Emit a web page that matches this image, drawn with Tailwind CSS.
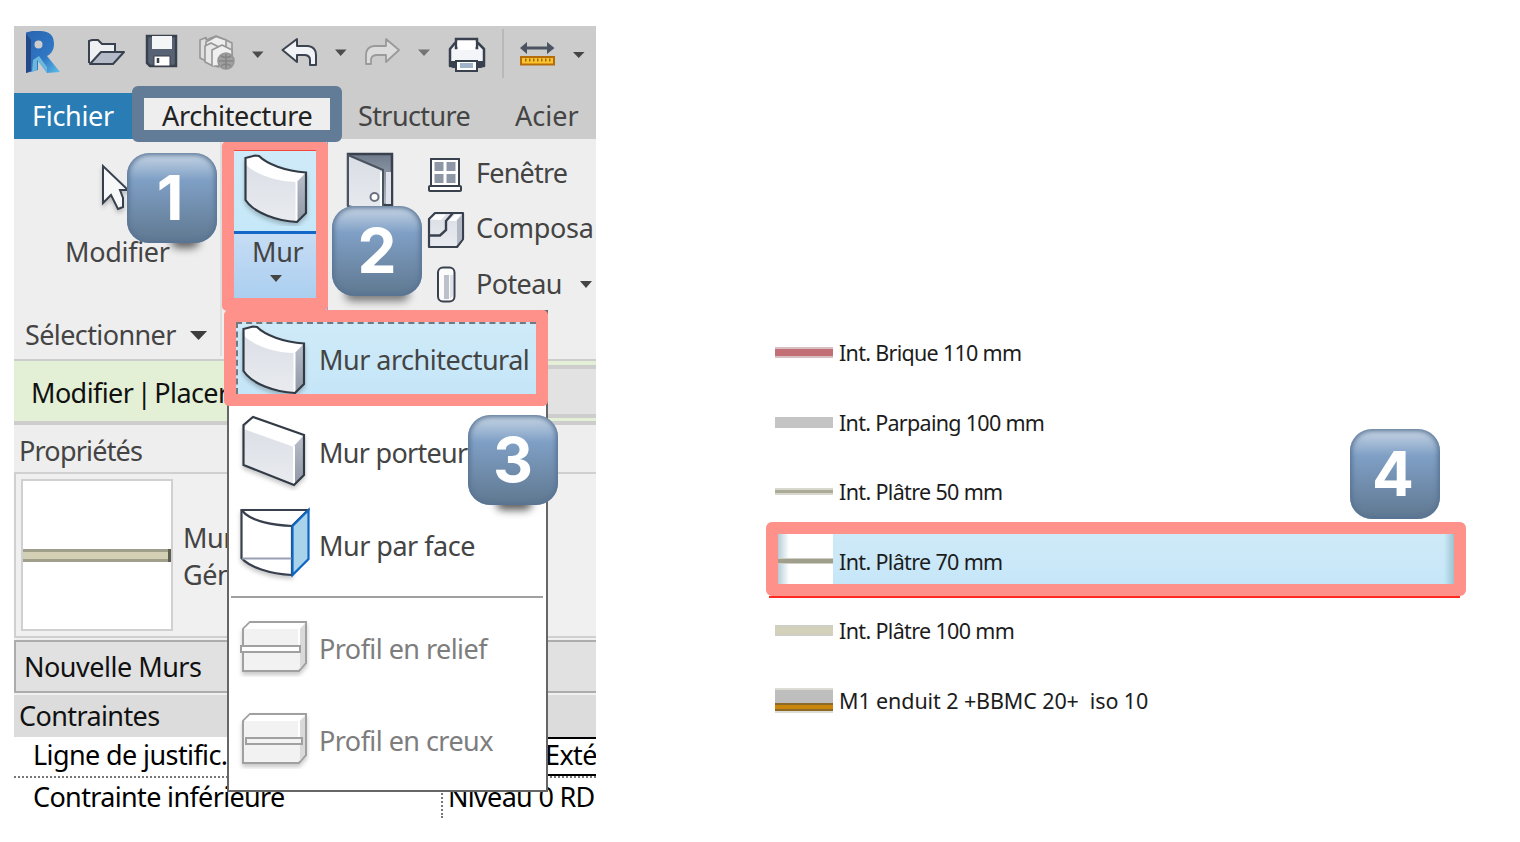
<!DOCTYPE html>
<html lang="fr">
<head>
<meta charset="utf-8">
<title>Murs</title>
<script src="https://cdn.jsdelivr.net/npm/@tailwindcss/browser@4"></script>
</head>
<body class="bg-white">
<svg width="0" height="0" class="absolute">
  <defs>
    <linearGradient id="face" x1="0" y1="0" x2="0" y2="1"><stop offset="0" stop-color="#d9dde5"/><stop offset="1" stop-color="#e9ebef"/></linearGradient>
    <linearGradient id="side" x1="0" y1="0" x2="0" y2="1"><stop offset="0" stop-color="#b9bfca"/><stop offset="1" stop-color="#8f97a5"/></linearGradient>
    <linearGradient id="glass" x1="0" y1="0" x2="0" y2="1"><stop offset="0" stop-color="#6f7b8c"/><stop offset="1" stop-color="#b4bac6"/></linearGradient>
    <linearGradient id="rblue" x1="0" y1="0" x2="1" y2="1"><stop offset="0" stop-color="#2a62b0"/><stop offset=".6" stop-color="#2f78c4"/><stop offset="1" stop-color="#5fc0ea"/></linearGradient>
    <filter id="sh" x="-20%" y="-20%" width="140%" height="150%"><feDropShadow dx="0" dy="3" stdDeviation="2" flood-opacity=".22"/></filter>
    <symbol id="wall" viewBox="0 0 74 76">
      <g filter="url(#sh)">
      <path d="M6.500 8L16 5.500L20 6C28 14 46 21 67 22.500V63L58 72C38 71 15 63 6.500 50Z" fill="url(#face)"/>
      <path d="M6.500 8L16 5.500L20 6C28 14 46 21 67 22.500L58 32C38 32 15 24 6.500 14Z" fill="#fff"/>
      <path d="M58 32L67 22.500V63L58 72Z" fill="url(#side)"/>
      <path d="M57.500 32V71" stroke="#fff" stroke-width="2"/>
      <path d="M6.500 8L16 5.500L20 6C28 14 46 21 67 22.500V63L58 72C38 71 15 63 6.500 50Z" fill="none" stroke="#333b45" stroke-width="2.200"/></g>
    </symbol>
    <symbol id="profil" viewBox="0 0 74 62">
      <g filter="url(#sh)"><path d="M7 14L14 7H70V48L63 56H7Z" fill="#f2f2f2" stroke="#a0a0a0" stroke-width="2"/>
      <path d="M8 14L14 8H69L63 14Z" fill="#fff"/><path d="M64 14L69 9V47L64 54Z" fill="#d9d9d9"/><path d="M63 14V30" stroke="#fff" stroke-width="2"/></g>
    </symbol>
  </defs>
</svg>
<main class="relative flex h-[842px] w-[1520px] overflow-hidden bg-white font-['Noto_Sans','Open_Sans',sans-serif] text-[27px] leading-[40px] whitespace-nowrap text-[#444]">
  <section class="mt-[26px] ml-[14px] flex h-[792px] w-[582px] shrink-0 flex-col overflow-hidden bg-white">
    <!-- Quick access bar -->
    <div class="flex h-[67px] shrink-0 bg-[#ccc]">
      <svg class="h-[67px] w-[58px] shrink-0" viewBox="14 26 58 67"><path d="M26 32.500L32 31H40C50 31 54 36 54 44C54 50 51 54 47 56L60 72L47 73L38 60V70L26 73Z" fill="url(#rblue)"/><path d="M26 34L31 40V71L26 73Z" fill="#234a86"/><path d="M33 60L39 56L47 67L47 73L37 60V70L32 72Z" fill="#6bb6dc"/><circle cx="38.500" cy="44.500" r="4" fill="#ccc"/></svg>
      <svg class="h-[67px] w-[63px] shrink-0" viewBox="72 26 63 67"><path d="M89 63V41L92 40H98L102 44H115V52" fill="#eef0f4" stroke="#38414d" stroke-width="2"/><path d="M90 64L101 52H124L113 64Z" fill="#b4bac7" stroke="#38414d" stroke-width="2" stroke-linejoin="round"/></svg>
      <svg class="h-[67px] w-[55px] shrink-0" viewBox="135 26 55 67"><path d="M147 36H176V66H150L147 63Z" fill="#576375" stroke="#38414d" stroke-width="2.500"/><path d="M152 36H172V49H152Z" fill="#f3f5f7"/><path d="M154 56H170V66H154Z" fill="#fff" stroke="#38414d" stroke-width="1"/><path d="M158 58V63" stroke="#38414d" stroke-width="2.500"/></svg>
      <svg class="h-[67px] w-[54px] shrink-0" viewBox="190 26 54 67" fill="#dfdfdf" stroke="#969696" stroke-width="1.600" stroke-linejoin="round"><path d="M200 44V40L206 37.500V40L216 36L226 40L232 43V60L218 67L200 58Z"/><path d="M206 60V42L216 36.500L226 40V48" fill="#eee"/><path d="M205 62V46L211 43L219 47V66L213 66Z" fill="#e8e8e8"/><path d="M212 66V50L222 45L232 50V60" fill="#f0f0f0"/><circle cx="226" cy="61" r="8" fill="#a0a0a0"/><path d="M219 61H233M226 54V69M221 56Q226 59 231 56M221 66Q226 62 231 66" stroke="#858585" fill="none"/></svg>
      <svg class="h-[67px] w-[27px] shrink-0" viewBox="244 26 27 67"><path d="M252 51.500H263.500L257.700 58Z" fill="#4c4c4c"/></svg>
      <svg class="h-[67px] w-[56px] shrink-0" viewBox="271 26 56 67"><path d="M282.500 50L297 39V46H308Q316 47 316 55V65H310V60Q310 55.500 305 55H297V62Z" fill="#f1f3f6" stroke="#3b4450" stroke-width="2" stroke-linejoin="round"/></svg>
      <svg class="h-[67px] w-[28px] shrink-0" viewBox="327 26 28 67"><path d="M335 49.500H346.500L340.700 56Z" fill="#4c4c4c"/></svg>
      <svg class="h-[67px] w-[54px] shrink-0" viewBox="355 26 54 67"><path d="M399 50L386 39V46H374Q366 47 366 55V64H371V59Q372 55 377 55H386V62Z" fill="#dcdcdc" stroke="#9a9a9a" stroke-width="1.800" stroke-linejoin="round"/></svg>
      <svg class="h-[67px] w-[28px] shrink-0" viewBox="409 26 28 67"><path d="M418 49.500H430L424 56Z" fill="#747474"/></svg>
      <svg class="h-[67px] w-[65px] shrink-0" viewBox="437 26 65 67"><path d="M450 49L455 43H478L484 49V66H450Z" fill="#f4f5f8" stroke="#38414d" stroke-width="2.500" stroke-linejoin="round"/><path d="M449 61H485V66L481 68H453L449 66Z" fill="#38414d"/><path d="M456 39H477V48H456Z" fill="#fff" stroke="#38414d" stroke-width="2.500"/><path d="M457.500 42H475.500V50H457.500Z" fill="#fff"/><path d="M456 61H477V71H456Z" fill="#fff" stroke="#38414d" stroke-width="2"/><path d="M460 63H473V68H460Z" fill="#9fb4c8"/></svg>
      <div class="mt-[3px] h-[49px] w-[2px] shrink-0 bg-[#b8b8b8]"></div>
      <svg class="h-[67px] w-[92px] shrink-0" viewBox="504 26 92 67"><path d="M520 48L527 42V46.500H547V42L554.500 48L547 54V49.500H527V54Z" fill="#4b5461"/><rect x="521" y="57" width="33" height="7.500" fill="#fdc32a" stroke="#b56d0c" stroke-width="2"/><path d="M525 60H551" stroke="#9c6d14" stroke-width="3" stroke-dasharray="1.500 2.500"/><path d="M573 52H584.500L578.700 58Z" fill="#444"/></svg>
    </div>
    <!-- Tabs -->
    <div class="flex h-[46px] shrink-0 items-center bg-[#ccc]">
      <div class="flex h-full w-[124px] shrink-0 items-center bg-[#297cb4] pb-px pl-[18px] text-white"><span class="tracking-[-0.3px]">Fichier</span></div>
      <div class="flex h-full w-[198px] shrink-0 items-center bg-[#eee] pb-px pl-[24px] text-[#222]"><span class="tracking-[-0.35px]">Architecture</span></div>
      <div class="w-[172px] shrink-0 pb-px pl-[22px]"><span class="tracking-[-0.6px]">Structure</span></div>
      <div class="pb-px pl-[7px]"><span>Acier</span></div>
    </div>
    <!-- Ribbon -->
    <div class="flex h-[220px] shrink-0 bg-[#eee]">
      <div class="flex h-[217px] w-[208px] shrink-0 flex-col border-r-2 border-[#dedede]">
        <svg class="h-[93px] w-[206px] shrink-0" viewBox="14 139 206 93"><path d="M103 166V203L111 195L118 209L123 207V198L120 190H128Z" fill="#f7f8fa" stroke="#38414d" stroke-width="2" filter="url(#sh)"/></svg>
        <div class="pl-[51px]"><span class="tracking-[-0.3px]">Modifier</span></div>
        <div class="mt-auto mb-px flex items-center pl-[11px]"><span class="tracking-[-0.6px]">Sélectionner</span><svg class="ml-[14px] h-[9px] w-[18px]" viewBox="0 0 20 10"><path d="M0 0H19L9.500 10Z" fill="#3d3d3d"/></svg></div>
      </div>
      <div class="ml-[12px] flex w-[94px] shrink-0 flex-col border-r border-[#7aa6d8] pt-[11px]">
        <div class="h-[81px] w-[82px] bg-linear-to-b from-[#cfeaf8] to-[#c5e8f8]"><svg class="ml-[5px] h-[76px] w-[74px]"><use href="#wall"/></svg></div>
        <div class="h-[67px] w-[82px] border-t-3 border-[#1467c8] bg-linear-to-b from-[#c6dcf4] to-[#abcff0] pl-[18px] leading-[36px]"><span class="tracking-[-0.3px]">Mur</span><svg class="mt-[5px] ml-[18px] h-[7px] w-[12px]" viewBox="0 0 12 7"><path d="M0 0H12L6 7Z" fill="#444"/></svg></div>
      </div>
      <svg class="h-[100px] w-[94px] shrink-0" viewBox="328 139 94 100"><path d="M348 154H392V205H348Z" fill="url(#glass)" stroke="#38414d" stroke-width="2.500"/><path d="M386 172H391V204H386Z" fill="#dfe2e8"/><path d="M348 155L383 170V215L348 206Z" fill="url(#face)" stroke="#4a5360" stroke-width="2"/><path d="M381 172V206" stroke="#fff" stroke-width="2"/><circle cx="374.500" cy="197" r="4" fill="#fff" stroke="#6a7280" stroke-width="2"/></svg>
      <div class="mt-[6px] flex w-[174px] shrink-0 flex-col">
        <div class="flex h-[55.500px] items-center"><svg class="h-[55px] w-[54px] shrink-0" viewBox="422 145 54 55"><path d="M431 159H459V186H431Z" fill="#fff" stroke="#38414d" stroke-width="2"/><path d="M434.500 162H443.500V171H434.500ZM446.500 162H455.500V171H446.500ZM434.500 174H443.500V183H434.500ZM446.500 174H455.500V183H446.500Z" fill="#8d97a6"/><rect x="429" y="186" width="32" height="5" rx="1" fill="#fff" stroke="#38414d" stroke-width="2"/></svg><span class="tracking-[-0.8px]">Fenêtre</span></div>
        <div class="flex h-[55.500px] items-center"><svg class="h-[55px] w-[54px] shrink-0" viewBox="422 200 54 55"><path d="M429 218L435 212H463V238L457 246H429Z" fill="url(#face)" stroke="#38414d" stroke-width="2.200" stroke-linejoin="round"/><path d="M430.500 218.500L436 213.500H446L441 219ZM448 220L455 213.500H461L456 220Z" fill="#fff"/><path d="M457 219L462 214V238L457 244Z" fill="#b2b8c4"/><path d="M429 234.500H440L446 229V220L453 212" fill="none" stroke="#38414d" stroke-width="2.400"/></svg><span class="tracking-[-0.3px]">Composa</span></div>
        <div class="flex h-[55.500px] items-center"><svg class="h-[55px] w-[54px] shrink-0" viewBox="422 256 54 55"><rect x="438" y="267.500" width="16.500" height="34" rx="5" fill="#fbfbfc" stroke="#38414d" stroke-width="2"/><path d="M444 275H449V299H444Z" fill="#bbc0ca"/><path d="M450 275H453V296L450 299Z" fill="#dfe2e8"/></svg><span class="tracking-[-0.6px]">Poteau</span><svg class="mt-[2px] mr-[4px] ml-auto h-[7px] w-[12px]" viewBox="0 0 12 7"><path d="M0 0H12L6 7Z" fill="#444"/></svg></div>
      </div>
    </div>
    <!-- Option bar -->
    <div class="flex h-[66px] shrink-0 border-t-2 border-b-4 border-[#cdcdcd] bg-[#e4f0d6]">
      <div class="flex w-[533px] shrink-0 items-center pt-[3px] pl-[17px] text-[#111]"><span class="tracking-[-0.6px] [word-spacing:-3px]">Modifier | Placer</span></div>
      <div class="mt-[4px] h-[53px] flex-1 border-y-4 border-[#cdcdcd] bg-[#e2e2e2]"></div>
    </div>
    <!-- Properties -->
    <div class="flex h-[47px] shrink-0 items-center bg-[#eee] pt-[4px] pl-[5px]"><span class="tracking-[-0.8px]">Propriétés</span></div>
    <div class="flex h-[166px] shrink-0 border-y-2 border-l-2 border-[#d0d0d0] bg-[#f0f0f0] pt-[5px] pl-[5px]">
      <div class="flex h-[152px] w-[152px] items-center border-2 border-[#d0d0d0] bg-white"><div class="flex h-[13px] w-full justify-end border-y-[3.500px] border-[#9f9f8c] bg-[#d4d0b5]"><div class="-my-[3px] w-[3px] bg-[#5d5d50]"></div></div></div>
      <div class="pt-[40px] pl-[10px] leading-[37px] tracking-[-0.4px]"><div>Mur</div><div>Gén</div></div>
    </div>
    <div class="h-[2px] shrink-0 bg-[#f0f0f0]"></div>
    <div class="flex h-[53px] shrink-0 items-center border-y-2 border-l-2 border-[#acacac] bg-[#e1e1e1] pt-px pl-[8px] text-[#111]"><span class="tracking-[-0.5px]">Nouvelle Murs</span></div>
    <div class="flex h-[44px] shrink-0 items-center border-t-2 border-[#f0f0f0] bg-[#dcdcdc] pb-px pl-[5px] text-[#111]"><span class="tracking-[-0.6px]">Contraintes</span></div>
    <div class="flex h-[41px] shrink-0 border-b-2 border-dotted border-[#777] text-black">
      <div class="w-[428px] shrink-0 pl-[19px] leading-[35px]"><span class="tracking-[-0.6px]">Ligne de justific...</span></div>
      <div class="flex h-[39px] w-[154px] shrink-0 items-center border-y-2 border-black pb-[3px] pl-[103px]"><span class="tracking-[-0.6px]">Exté</span></div>
    </div>
    <div class="flex h-[40px] shrink-0 items-start text-black">
      <div class="w-[427px] shrink-0 pl-[19px] leading-[37px]"><span class="tracking-[-0.65px]">Contrainte inférieure</span></div>
      <div class="h-[40px] shrink-0 border-l-2 border-dotted border-[#777] pl-[5px] leading-[37px]"><span class="tracking-[-0.7px]">Niveau 0 RD</span></div>
    </div>
  </section>

  <!-- Wall type list -->
  <section class="ml-[170px] flex w-[700px] shrink-0 flex-col pt-[318px] text-[21.500px] text-[#1c1c1c]">
    <div class="flex h-[69.500px] items-center pl-[9px]"><div class="h-[11px] w-[58px] border-y-2 border-[#d9bfc1] bg-[#c26f75]"></div><span class="pt-px pl-[6px] tracking-[-0.7px]">Int. Brique 110 mm</span></div>
    <div class="flex h-[69.500px] items-center pl-[9px]"><div class="h-[11px] w-[58px] bg-[#c4c4c4]"></div><span class="pt-px pl-[6px] tracking-[-0.7px]">Int. Parpaing 100 mm</span></div>
    <div class="flex h-[69.500px] items-center pl-[9px]"><div class="h-[7px] w-[58px] border-y-2 border-[#d8d7cd] bg-[#abab98]"></div><span class="pt-px pl-[6px] tracking-[-0.65px]">Int. Plâtre 50 mm</span></div>
    <div class="flex h-[69.500px] items-center pl-[12px]"><div class="flex h-[60px] w-[55px] items-center bg-linear-to-r from-[#b4cdd8] to-white to-20%"><div class="h-[6px] w-full border-y border-[#cfcec4] bg-[#a09f8c]"></div></div><div class="flex h-[60px] w-[621px] items-center bg-linear-to-b from-[#cfeaf8] to-[#c5e6f8]"><span class="pt-px pl-[6px] tracking-[-0.65px]">Int. Plâtre 70 mm</span><div class="ml-auto h-full w-[10px] bg-linear-to-r from-transparent to-[#9cc3d0]"></div></div></div>
    <div class="flex h-[69.500px] items-center pl-[9px]"><div class="h-[11px] w-[58px] border-y-2 border-[#d0cfc3] bg-[#d4d1bb]"></div><span class="pt-px pl-[6px] tracking-[-0.65px]">Int. Plâtre 100 mm</span></div>
    <div class="flex h-[69.500px] items-center pl-[9px]"><svg class="h-[25px] w-[58px]" viewBox="0 0 58 25"><path d="M0 0H58V25H0Z" fill="#dcdcd4"/><path d="M0 2H58V16H0Z" fill="#bebebe"/><path d="M0 15H58V23H0Z" fill="#8d6a26"/><path d="M0 17H58V21H0Z" fill="#c9860b"/></svg><span class="pt-px pl-[6px] tracking-[-0.1px] whitespace-pre">M1 enduit 2 +BBMC 20+  iso 10</span></div>
  </section>

  <!-- Wall drop-down menu -->
  <div class="absolute top-[310px] left-[227px] flex h-[482px] w-[320.500px] flex-col border-2 border-[#666] bg-white pt-[2px] pl-[2px]">
    <div class="mt-[8px] ml-[5px] flex h-[72px] w-[300px] items-center border-t-2 border-l-2 border-dashed border-[#707a80] bg-linear-to-b from-[#cfeaf8] to-[#c5e6f8]"><svg class="-mt-px h-[76px] w-[74px] shrink-0 -translate-x-px"><use href="#wall"/></svg><span class="pt-[2px] pl-[7px] tracking-[-0.5px]">Mur architectural</span></div>
    <div class="flex h-[114px] items-center pl-[5px]"><svg class="mr-[9px] h-[80px] w-[74px] shrink-0" viewBox="236 411 74 80"><g filter="url(#sh)"><path d="M243.500 425L253 417L304 435V475L294 485L243.500 465Z" fill="url(#face)"/><path d="M243.500 429L253 417L304 435L294 447Z" fill="#fff"/><path d="M294 446L304 435V475L294 485Z" fill="url(#side)"/><path d="M294 446V484" stroke="#fff" stroke-width="2"/><path d="M243.500 425L253 417L304 435V475L294 485L243.500 465Z" fill="none" stroke="#333b45" stroke-width="2.200"/></g></svg><span class="pt-[3px] tracking-[-0.7px]">Mur porteur</span></div>
    <div class="flex h-[74px] items-center pl-[5px]"><svg class="mr-[9px] h-[80px] w-[74px] shrink-0" viewBox="236 505 74 80"><g filter="url(#sh)" fill="none" stroke="#38414d" stroke-width="2.200"><path d="M292 575C270 574 249 567 241.500 558V510H308L292 526Z" fill="#fff"/><path d="M292 526C270 525 250 521 241.500 510"/></g><path d="M242 558.500H292" stroke="#9aa0b4" stroke-width="2"/><path d="M292.500 526L308.500 510V559L292.500 575Z" fill="#a9d3ea" stroke="#0f66c4" stroke-width="2.200"/></svg><span class="pt-px tracking-[-0.5px]">Mur par face</span></div>
    <div class="mt-[14px] h-[2px] w-[312px] bg-[#a0a0a0]"></div>
    <div class="mt-[18px] flex h-[66px] items-center pl-[5px] text-[#7d7d7d]"><svg class="-mt-[7px] mr-[9px] h-[62px] w-[74px] shrink-0"><use href="#profil"/><path d="M5 31H64V37H5Z" fill="#fff" stroke="#a0a0a0" stroke-width="2"/></svg><span class="tracking-[-0.55px]">Profil en relief</span></div>
    <div class="mt-[26px] flex h-[66px] items-center pl-[5px] text-[#7d7d7d]"><svg class="-mt-[7px] mr-[9px] h-[62px] w-[74px] shrink-0"><use href="#profil"/><path d="M10 31H66V37H10Z" fill="#f3f3f3" stroke="#a0a0a0" stroke-width="2"/></svg><span class="tracking-[-0.55px]">Profil en creux</span></div>
  </div>

  <!-- Callout frames -->
  <div class="absolute top-[141px] left-[222px] h-[170px] w-[106px] rounded-[5px] border-x-12 border-t-9 border-b-13 border-[#fe918a]"><div class="h-px bg-[#f4453b]"></div></div>
  <div class="absolute top-[86px] left-[132px] h-[56px] w-[210px] rounded-[6px] border-12 border-[#627b97]"></div>
  <div class="absolute top-[310px] left-[224px] h-[96px] w-[324px] rounded-[5px] border-12 border-[#fe918a]"></div>
  <div class="absolute top-[596px] left-[769px] h-[1.500px] w-[691px] bg-[#ff2a20]"></div>
  <div class="absolute top-[522px] left-[766px] h-[74px] w-[700px] rounded-[6px] border-12 border-[#fe918a]"></div>

  <!-- Step badges -->
  <div class="absolute top-[234px] left-[171px] h-[14px] w-7 rounded-full bg-black/60 blur-[4px]"></div>
  <div class="absolute top-[287px] left-[345px] h-[14px] w-16 rounded-full bg-black/50 blur-[4px]"></div>
  <div class="absolute top-[496px] left-[496px] h-[14px] w-9 rounded-full bg-black/65 blur-[4px]"></div>
  <div class="absolute top-[153px] left-[127px] flex size-[90px] items-center justify-center rounded-[22px] bg-linear-to-b from-[#c9d7e5] via-[#7f9fc5] via-30% to-[#5f7890] pr-[4px] font-['Inter',sans-serif] text-[62px] font-bold text-white inset-shadow-[0_0_5px_2px_#587393]">1</div>
  <div class="absolute top-[206px] left-[332px] flex size-[90px] items-center justify-center rounded-[22px] bg-linear-to-b from-[#c9d7e5] via-[#7f9fc5] via-30% to-[#5f7890] font-['Inter',sans-serif] text-[62px] font-bold text-white inset-shadow-[0_0_5px_2px_#587393]">2</div>
  <div class="absolute top-[415px] left-[468px] flex size-[90px] items-center justify-center rounded-[22px] bg-linear-to-b from-[#c9d7e5] via-[#7f9fc5] via-30% to-[#5f7890] font-['Inter',sans-serif] text-[62px] font-bold text-white inset-shadow-[0_0_5px_2px_#587393]">3</div>
  <div class="absolute top-[429px] left-[1350px] flex size-[90px] items-center justify-center rounded-[22px] bg-linear-to-b from-[#c9d7e5] via-[#7f9fc5] via-30% to-[#5f7890] pr-[4px] font-['Inter',sans-serif] text-[62px] font-bold text-white inset-shadow-[0_0_5px_2px_#587393]">4</div>
</main>
</body>
</html>
